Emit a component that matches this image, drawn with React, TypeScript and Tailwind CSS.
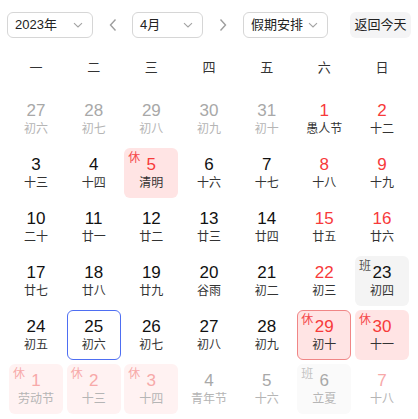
import React from 'react';

type Day = {
  n: number;
  lunar: string;
  other?: boolean;
  red?: boolean;
  tag?: '休' | '班';
  today?: boolean;
  selected?: boolean;
};

const weekdays = ['一', '二', '三', '四', '五', '六', '日'];

const days: Day[] = [
  { n: 27, lunar: '初六', other: true },
  { n: 28, lunar: '初七', other: true },
  { n: 29, lunar: '初八', other: true },
  { n: 30, lunar: '初九', other: true },
  { n: 31, lunar: '初十', other: true },
  { n: 1, lunar: '愚人节', red: true },
  { n: 2, lunar: '十二', red: true },
  { n: 3, lunar: '十三' },
  { n: 4, lunar: '十四' },
  { n: 5, lunar: '清明', red: true, tag: '休' },
  { n: 6, lunar: '十六' },
  { n: 7, lunar: '十七' },
  { n: 8, lunar: '十八', red: true },
  { n: 9, lunar: '十九', red: true },
  { n: 10, lunar: '二十' },
  { n: 11, lunar: '廿一' },
  { n: 12, lunar: '廿二' },
  { n: 13, lunar: '廿三' },
  { n: 14, lunar: '廿四' },
  { n: 15, lunar: '廿五', red: true },
  { n: 16, lunar: '廿六', red: true },
  { n: 17, lunar: '廿七' },
  { n: 18, lunar: '廿八' },
  { n: 19, lunar: '廿九' },
  { n: 20, lunar: '谷雨' },
  { n: 21, lunar: '初二' },
  { n: 22, lunar: '初三', red: true },
  { n: 23, lunar: '初四', tag: '班' },
  { n: 24, lunar: '初五' },
  { n: 25, lunar: '初六', today: true },
  { n: 26, lunar: '初七' },
  { n: 27, lunar: '初八' },
  { n: 28, lunar: '初九' },
  { n: 29, lunar: '初十', red: true, tag: '休', selected: true },
  { n: 30, lunar: '十一', red: true, tag: '休' },
  { n: 1, lunar: '劳动节', other: true, red: true, tag: '休' },
  { n: 2, lunar: '十三', other: true, red: true, tag: '休' },
  { n: 3, lunar: '十四', other: true, red: true, tag: '休' },
  { n: 4, lunar: '青年节', other: true },
  { n: 5, lunar: '十六', other: true },
  { n: 6, lunar: '立夏', other: true, tag: '班' },
  { n: 7, lunar: '十八', other: true, red: true },
];

const font = { fontFamily: '"Liberation Sans", Arial, "Noto Sans CJK SC", sans-serif' };

function ChevronDown() {
  return (
    <svg width="12" height="12" viewBox="0 0 12 12" fill="none" stroke="#a3a3a3" strokeWidth="1.1">
      <path d="M2 4.2 6 8l4-3.8" />
    </svg>
  );
}

function Arrow({ dir }: { dir: 'l' | 'r' }) {
  return (
    <svg width="10" height="14" viewBox="0 0 10 14" fill="none" stroke="#9e9e9e" strokeWidth="1.4">
      <path d={dir === 'l' ? 'M7.5 1.5 2.5 7l5 5.5' : 'M2.5 1.5 7.5 7l-5 5.5'} />
    </svg>
  );
}

function Select({ label, width }: { label: string; width: string }) {
  return (
    <div className={`${width} h-[26px] flex items-center justify-between border border-[#d6d6d6] rounded-[6px] pl-[7px] pr-[8px] text-[13px] text-[#222]`}>
      <span>{label}</span>
      <ChevronDown />
    </div>
  );
}

function Cell({ d }: { d: Day }) {
  let box = 'border border-transparent';
  if (d.tag === '休') box = d.other ? 'bg-[#fff2f2] border border-transparent' : 'bg-[#ffe4e4] border border-transparent';
  if (d.tag === '班') box = d.other ? 'bg-[#fafafa] border border-transparent' : 'bg-[#f4f4f4] border border-transparent';
  if (d.selected) box = 'bg-[#ffe4e4] border border-[#f08686]';
  if (d.today) box = 'border border-[#4e6ef2]';

  let num = 'text-[#111]';
  if (d.red) num = d.other ? 'text-[#f7a9a9]' : 'text-[#f73a3a]';
  else if (d.other) num = 'text-[#a8a8a8]';

  const lunar = d.other ? 'text-[#b5b5b5]' : 'text-[#333]';

  let tag = '';
  if (d.tag === '休') tag = d.other ? 'text-[#f7a9a9]' : 'text-[#f5484a]';
  if (d.tag === '班') tag = d.other ? 'text-[#c4c4c4]' : 'text-[#555]';

  return (
    <div className={`relative h-[50px] rounded-[6px] flex flex-col items-center justify-center ${box}`}>
      {d.tag && <span className={`absolute left-[3px] top-[2px] text-[12px] leading-[14px] ${tag}`}>{d.tag}</span>}
      <span className={`text-[17px] leading-[20px] ${num}`}>{d.n}</span>
      <span className={`text-[12px] leading-[16px] ${lunar}`}>{d.lunar}</span>
    </div>
  );
}

export default function App() {
  return (
    <div className="w-[418px] h-[419px] bg-white px-[7px] pt-[12px]" style={font}>
      <div className="flex items-center">
        <Select label="2023年" width="w-[86px]" />
        <div className="w-[39px] flex justify-center">
          <Arrow dir="l" />
        </div>
        <Select label="4月" width="w-[71px]" />
        <div className="w-[40px] flex justify-center">
          <Arrow dir="r" />
        </div>
        <Select label="假期安排" width="w-[85px]" />
        <div className="ml-auto h-[26px] w-[61px] rounded-[6px] bg-[#f4f4f5] flex items-center justify-center text-[13px] text-[#222]">
          返回今天
        </div>
      </div>

      <div className="px-[2px]">
        <div className="grid grid-cols-7 gap-x-[3.6px] mt-[20px] h-[20px] items-center">
          {weekdays.map((w) => (
            <div key={w} className="text-center text-[13px] text-[#333]">{w}</div>
          ))}
        </div>
        <div className="grid grid-cols-7 gap-x-[3.6px] gap-y-[4px] mt-[16px]">
          {days.map((d, i) => (
            <Cell key={i} d={d} />
          ))}
        </div>
      </div>
    </div>
  );
}
